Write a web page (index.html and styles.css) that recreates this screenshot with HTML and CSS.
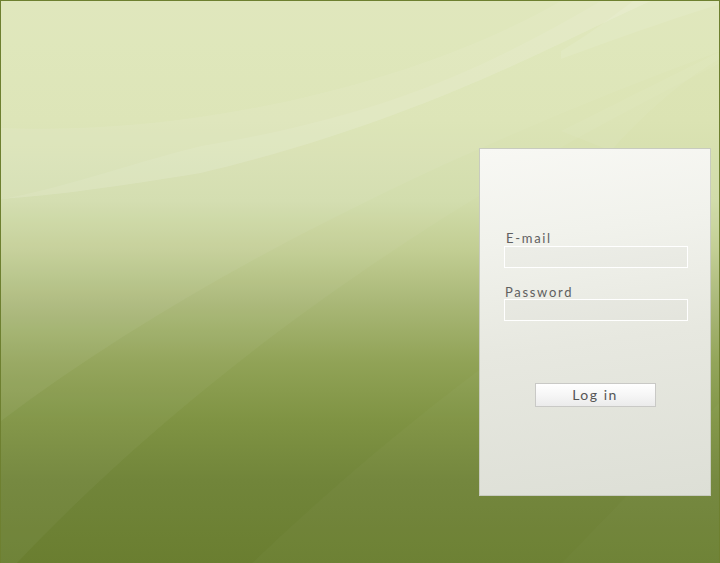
FILE: index.html
```html
<!DOCTYPE html>
<html lang="en">
<head>
<meta charset="utf-8">
<title>Log in</title>
<link rel="stylesheet" href="styles.css">
</head>
<body>
<div class="screen">
  <svg class="backdrop" viewBox="0 0 720 563" preserveAspectRatio="none" aria-hidden="true">
    <path class="soft1" d="M0,420 C200,270 450,150 720,50 L720,0 L0,0 Z"/>
    <path class="soft2" d="M15,563 C160,410 380,230 720,62 L720,0 L0,0 L0,563 Z"/>
    <path class="soft3" d="M250,563 C400,420 560,300 720,210 L720,563 Z"/>
    <path class="soft4" d="M560,563 C620,500 680,440 720,400 L720,563 Z"/>
    <path class="soft5" d="M560,130 C620,100 680,70 720,50 L720,57 C680,80 640,115 610,150 Z"/>
    <path class="band1" d="M0,127 C200,135 420,80 560,0 L650,0 C560,40 420,120 200,172 C120,185 50,195 0,198 Z"/>
    <path class="band2" d="M200,145 C380,115 480,70 600,0 L650,0 C560,40 420,120 200,172 C120,185 50,195 0,198 C60,188 120,165 200,145 Z"/>
    <path class="band3" d="M560,50 C590,32 612,15 632,0 L720,0 L720,3 C665,20 610,40 560,58 Z"/>
  </svg>
  <form class="panel">
    <label class="label label-email" for="email">E-mail</label>
    <input class="field" id="email" type="text">
    <label class="label label-pass" for="pass">Password</label>
    <input class="field field-pass" id="pass" type="password">
    <button class="btn" type="button">Log in</button>
  </form>
</div>
</body>
</html>
```

FILE: styles.css
```css
html, body {
  margin: 0;
  padding: 0;
  background: #6b7f31;
}

.screen {
  position: relative;
  width: 720px;
  height: 563px;
  box-sizing: border-box;
  border: 1px solid #6e8030;
  border-bottom: none;
  overflow: hidden;
  display: flex;
  justify-content: flex-end;
  align-items: flex-start;
  background: linear-gradient(180deg,
    #dee6b8 0px,
    #dbe3b3 120px,
    #d1dcaa 200px,
    #c1cd92 250px,
    #aab878 300px,
    #91a357 360px,
    #7f9343 420px,
    #71853a 480px,
    #6a7e30 563px);
  font-family: Lato, "Open Sans", "DejaVu Sans", sans-serif;
}

.backdrop {
  position: absolute;
  left: 0;
  top: 0;
  width: 720px;
  height: 563px;
  z-index: 0;
}

.soft1 { fill: #ffffff; opacity: 0.05; }
.soft2 { fill: #ffffff; opacity: 0.04; }
.soft3 { fill: #ffffff; opacity: 0.025; }
.soft4 { fill: #ffffff; opacity: 0.02; }
.soft5 { fill: #ffffff; opacity: 0.05; }
.band1 { fill: #ffffff; opacity: 0.07; }
.band2 { fill: #ffffff; opacity: 0.08; }
.band3 { fill: #ffffff; opacity: 0.09; }

.panel {
  position: relative;
  z-index: 1;
  margin: 147px 8px 0 0;
  width: 232px;
  height: 348px;
  box-sizing: border-box;
  border: 1px solid #c8cbbf;
  background: linear-gradient(172deg, #f8f8f4 0%, #f1f2ec 25%, #e7e8e0 55%, #dddfd6 100%);
  padding: 82px 0 0 24px;
  display: flex;
  flex-direction: column;
  align-items: flex-start;
}

.label {
  font-size: 13px;
  line-height: 15px;
  letter-spacing: 1.7px;
  color: #606060;
}

.label-email {
  margin-left: 2px;
}

.label-pass {
  margin-left: 1px;
  margin-top: 17px;
}

.field {
  margin: 0;
  width: 184px;
  height: 22px;
  box-sizing: border-box;
  border: 1px solid #ffffff;
  background: rgba(0, 0, 0, 0.015);
  padding: 0 4px;
  outline: none;
}

.field-pass {
  margin-top: -1px;
}

.btn {
  align-self: center;
  margin: 62px 0 0 -24px;
  width: 121px;
  height: 24px;
  box-sizing: border-box;
  border: 1px solid #c9c9c6;
  background: linear-gradient(180deg, #ffffff 0%, #f6f6f6 50%, #ebebeb 100%);
  font-family: Lato, "Open Sans", "DejaVu Sans", sans-serif;
  font-size: 14px;
  letter-spacing: 1.5px;
  color: #555555;
  padding: 0;
  line-height: 22px;
}
```
